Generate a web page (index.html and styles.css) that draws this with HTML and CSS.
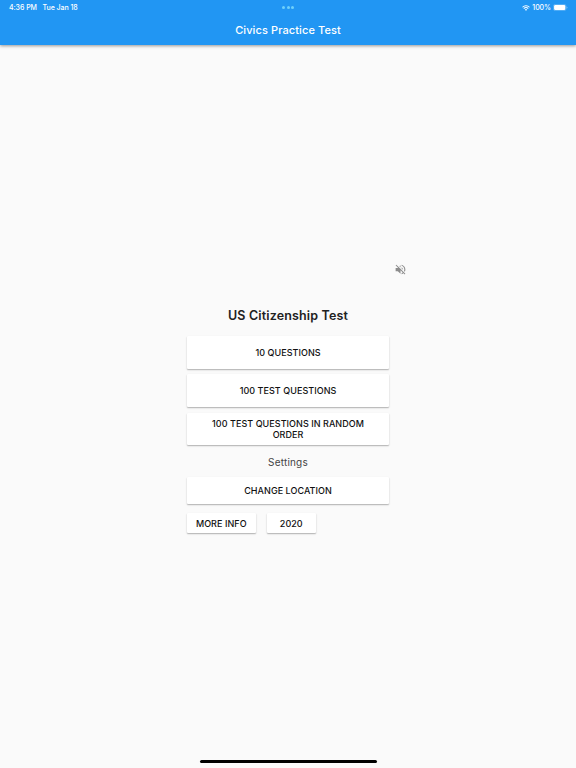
FILE: index.html
```
<!DOCTYPE html>
<html lang="en">
<head>
    <meta charset="UTF-8">
    <meta name="viewport" content="width=device-width, initial-scale=1.0">
    <title>Civics Practice Test</title>
    <link rel="stylesheet" href="styles.css">
</head>
<body>
    <header class="app-bar">
        <div class="status-bar">
            <div class="status-left">
                <span class="time">4:36 PM</span>
                <span class="date">Tue Jan 18</span>
            </div>
            <div class="dots"><i></i><i></i><i></i></div>
            <div class="status-right">
                <svg class="wifi" viewBox="0 0 16 12">
                    <path d="M1 4.5a10 10 0 0 1 14 0M3.5 7.1a6.4 6.4 0 0 1 9 0" fill="none" stroke="#fff" stroke-width="2.1"/>
                    <path d="M5.7 9.3a3.3 3.3 0 0 1 4.6 0L8 11.7z" fill="#fff"/>
                </svg>
                <span class="percent">100%</span>
                <svg class="battery" viewBox="0 0 28 13">
                    <rect x="0.7" y="0.7" width="23.6" height="11.6" rx="3.5" fill="none" stroke="#fff" stroke-opacity="0.45"/>
                    <rect x="2" y="2" width="21" height="9" rx="2.2" fill="#fff"/>
                    <path d="M25.6 4.5c1.8.6 1.8 3.4 0 4z" fill="#fff" fill-opacity="0.5"/>
                </svg>
            </div>
        </div>
        <h1 class="title">Civics Practice Test</h1>
    </header>

    <main class="content">
        <svg class="mute" viewBox="0 0 24 24">
            <path d="M16.5 12A4.5 4.5 0 0 0 14 7.97v2.21l2.45 2.45c.03-.2.05-.41.05-.63zm2.5 0c0 .94-.2 1.82-.54 2.64l1.51 1.51A8.8 8.8 0 0 0 21 12c0-4.28-2.99-7.86-7-8.77v2.06c2.89.86 5 3.54 5 6.71zM4.27 3L3 4.27 7.73 9H3v6h4l5 5v-6.73l4.25 4.25c-.67.52-1.42.93-2.25 1.18v2.06a8.99 8.99 0 0 0 3.69-1.81L19.73 21 21 19.73l-9-9L4.27 3zM12 4L9.91 6.09 12 8.18V4z" fill="#8c8c8c"/>
        </svg>
        <h2 class="heading">US Citizenship Test</h2>
        <div class="tests">
            <button class="btn">10 QUESTIONS</button>
            <button class="btn">100 TEST QUESTIONS</button>
            <button class="btn">100 TEST QUESTIONS IN RANDOM ORDER</button>
        </div>
        <p class="settings">Settings</p>
        <button class="btn location">CHANGE LOCATION</button>
        <div class="options">
            <button class="btn info">MORE INFO</button>
            <button class="btn year">2020</button>
        </div>
    </main>

    <div class="home-indicator"></div>
</body>
</html>
```

FILE: styles.css
```
* {
    box-sizing: border-box;
}
body {
    margin: 0;
    height: 768px;
    display: flex;
    flex-direction: column;
    align-items: center;
    overflow: hidden;
    background: #fafafa;
    color: #212121;
    font-family: Inter, "Liberation Sans", sans-serif;
}
.app-bar {
    width: 100%;
    height: 45px;
    flex: none;
    background: #2196f3;
    color: white;
    box-shadow: 0 1px 3px rgba(0,0,0,0.4);
}
.status-bar {
    display: grid;
    grid-template-columns: 1fr auto 1fr;
    align-items: center;
    height: 15px;
    padding: 0 8px 0 9px;
    font-size: 7px;
    font-weight: 500;
    line-height: 15px;
    letter-spacing: -0.05px;
}
.status-left {
    display: flex;
    gap: 5.5px;
}
.time {
    width: 28px;
    white-space: nowrap;
}
.dots {
    display: flex;
    gap: 1.5px;
    margin-right: 1px;
}
.dots i {
    width: 3px;
    height: 3px;
    border-radius: 50%;
    background: #6fd0fa;
}
.status-right {
    display: flex;
    align-items: center;
    justify-content: flex-end;
    gap: 2px;
}
.wifi {
    width: 8px;
    height: 6px;
}
.battery {
    width: 15px;
    height: 7px;
}
.title {
    margin: 5px 0 0;
    text-align: center;
    font-size: 11px;
    font-weight: 500;
    line-height: 20px;
    letter-spacing: 0.1px;
}
.content {
    width: 202px;
    flex: 1;
    display: flex;
    flex-direction: column;
    padding-top: 218px;
}
.mute {
    width: 13px;
    height: 13px;
    align-self: flex-end;
    margin-right: -18px;
}
.heading {
    margin: 30px 0 10px;
    text-align: center;
    font-size: 12.5px;
    font-weight: 600;
    line-height: 20px;
    letter-spacing: 0.15px;
}
.tests {
    display: grid;
    grid-auto-rows: 32.5px;
    gap: 5.75px;
}
.btn {
    border: none;
    border-radius: 1px;
    padding: 0 20px;
    background: white;
    color: #111;
    box-shadow: 0 1px 1.5px rgba(0,0,0,0.3);
    font-family: inherit;
    font-size: 9px;
    font-weight: 500;
    line-height: 11px;
    letter-spacing: 0.05px;
}
.settings {
    margin: 7px 0 5px;
    text-align: center;
    color: #444;
    font-size: 10px;
    line-height: 20px;
    letter-spacing: 0.2px;
}
.location {
    height: 27px;
}
.options {
    display: flex;
    gap: 11px;
    margin-top: 9px;
}
.options .btn {
    height: 20px;
    padding: 0;
}
.info {
    width: 68.5px;
}
.year {
    width: 49.5px;
}
.home-indicator {
    width: 177px;
    height: 3px;
    margin-bottom: 5px;
    border-radius: 2px;
    background: black;
}
```
